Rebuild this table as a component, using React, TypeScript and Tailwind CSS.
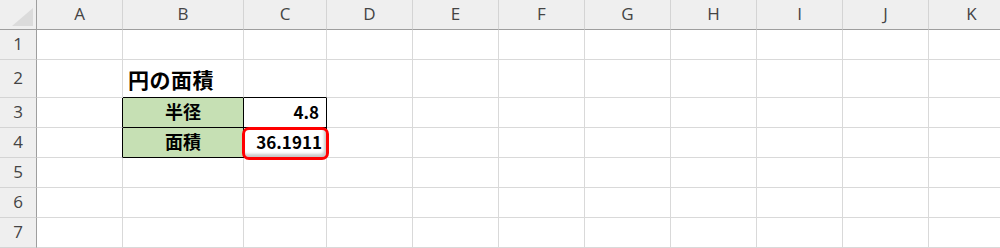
const columns = ["A", "B", "C", "D", "E", "F", "G", "H", "I", "J", "K"];
const rows = [1, 2, 3, 4, 5, 6, 7];

const grid =
  "grid grid-cols-[37px_86px_121px_83px_86px_86px_86px_86px_86px_86px_86px_86px] grid-rows-[30px_30px_38px_30px_30px_30px_30px_30px]";

// cells that carry the thin black outline of the little table
const blackRight = new Set(["A3", "A4", "B3", "B4", "C3", "C4"]);
const blackBottom = new Set(["B2", "C2", "B3", "B4", "C3", "C4"]);

function Cell({ id }: { id: string }) {
  const right = blackRight.has(id) ? "border-r-black" : "border-r-[#d9d9d9]";
  const bottom = blackBottom.has(id) ? "border-b-black" : "border-b-[#d9d9d9]";
  const fill = id === "B3" || id === "B4" ? "bg-[#c6e0b4]" : "bg-white";

  let content: React.ReactNode = null;
  if (id === "B2") {
    content = (
      <span className="absolute bottom-[7px] left-[5px] whitespace-nowrap text-[21px] font-bold leading-none tracking-[0.5px] text-black">
        円の面積
      </span>
    );
  } else if (id === "B3" || id === "B4") {
    content = (
      <span className="flex h-full items-center justify-center pb-[2px] text-[18px] font-bold text-black">
        {id === "B3" ? "半径" : "面積"}
      </span>
    );
  } else if (id === "C3") {
    content = (
      <span className="flex h-full items-center justify-end pr-[7px] pb-[2px] text-[17px] font-bold text-black">
        4.8
      </span>
    );
  } else if (id === "C4") {
    content = (
      <>
        <span className="relative z-10 flex h-full items-center justify-end pr-[4px] pb-[2px] text-[17px] font-bold text-black">
          36.1911
        </span>
        {/* selection highlight */}
        <span className="pointer-events-none absolute -left-[2px] -top-[1px] -right-[3px] -bottom-[3px] z-20 rounded-[7px] border-[3px] border-[#ff0000] shadow-[inset_-2px_-3px_3px_rgba(0,0,0,0.22)]" />
      </>
    );
  }

  return (
    <div className={`relative border-r border-b ${right} ${bottom} ${fill}`}>
      {content}
    </div>
  );
}

export default function App() {
  return (
    <div
      className="h-[248px] w-[1000px] overflow-hidden bg-white"
      style={{ fontFamily: '"Noto Sans CJK JP", "Noto Sans", sans-serif' }}
    >
      <div className={grid}>
        {/* corner */}
        <div className="relative border-r border-b border-r-[#9e9e9e] border-b-[#9e9e9e] bg-[#efefef]">
          <svg className="absolute left-[12px] top-[8px]" width="21" height="18" viewBox="0 0 21 18">
            <polygon points="21,0 21,18 0,18" fill="#dbdbdb" />
          </svg>
        </div>
        {columns.map((c) => (
          <div
            key={c}
            className="flex items-center justify-center border-r border-b border-r-[#d4d4d4] border-b-[#9e9e9e] bg-[#efefef] pb-[1px] font-['Open_Sans',sans-serif] text-[17px] text-[#444]"
          >
            {c}
          </div>
        ))}
        {rows.map((r) => (
          <>
            <div
              key={`h${r}`}
              className="flex items-center justify-center border-r border-b border-r-[#9e9e9e] border-b-[#d4d4d4] bg-[#efefef] pb-[1px] font-['Open_Sans',sans-serif] text-[17px] text-[#444]"
            >
              {r}
            </div>
            {columns.map((c) => (
              <Cell key={`${c}${r}`} id={`${c}${r}`} />
            ))}
          </>
        ))}
      </div>
    </div>
  );
}
